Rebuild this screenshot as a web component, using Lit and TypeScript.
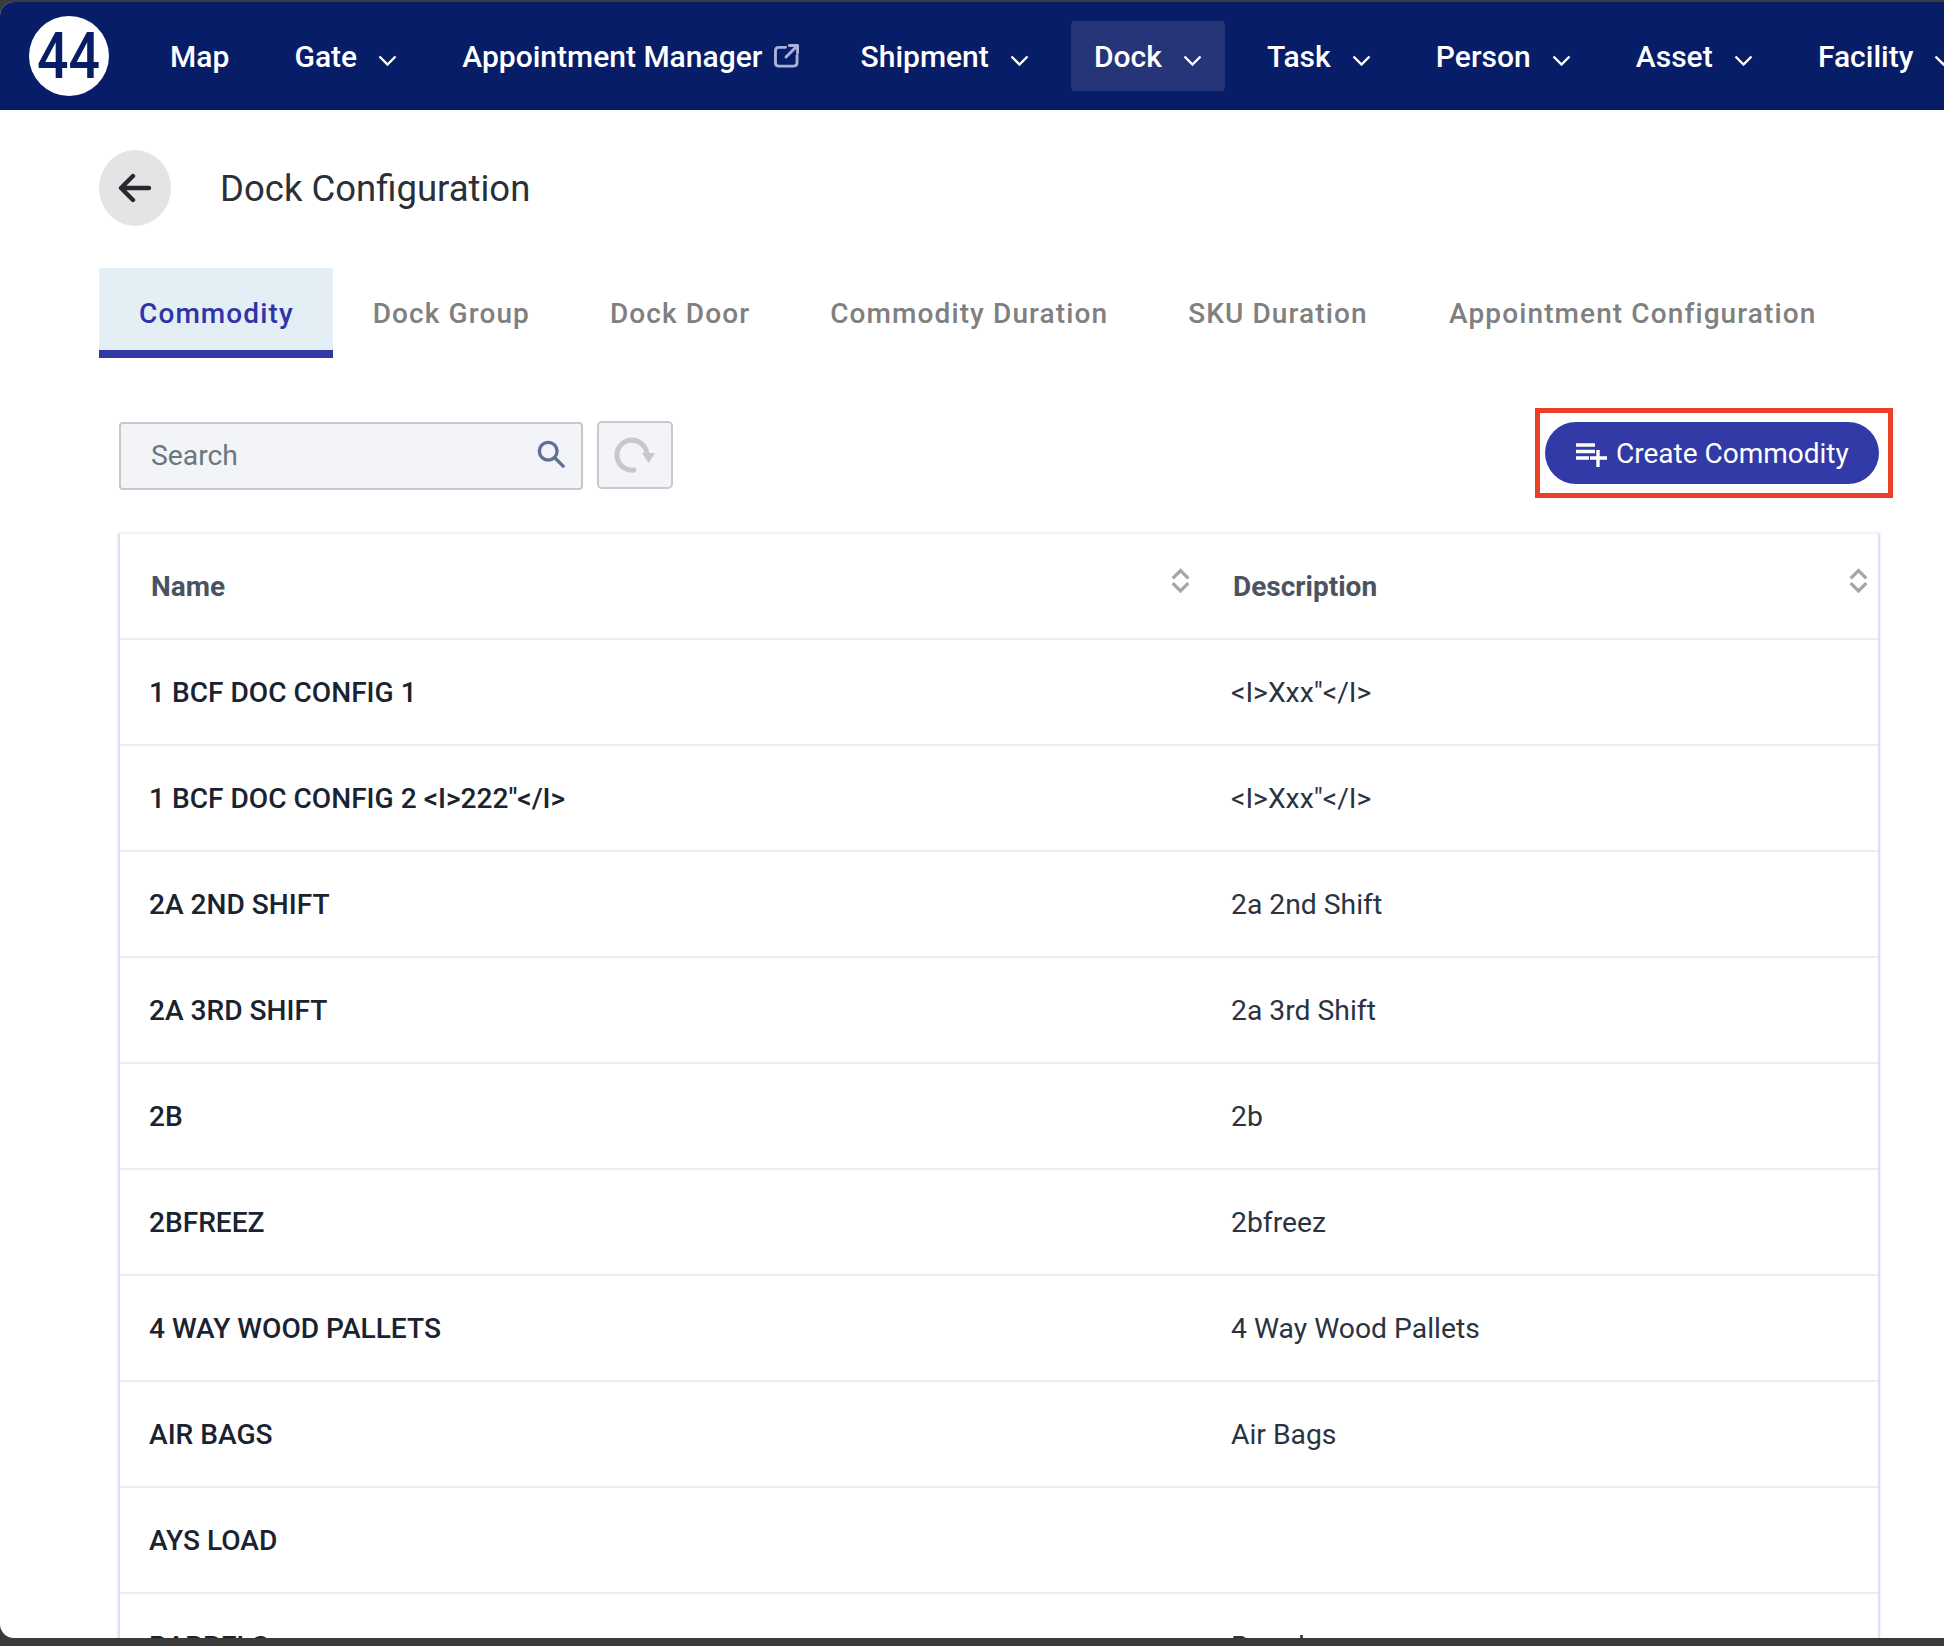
import { LitElement, html, css } from "lit";
import { customElement } from "lit/decorators.js";

const chevron = html`<svg class="chev" viewBox="0 0 19 11"><path d="M1.5 1.5 9.5 9.5 17.5 1.5"/></svg>`;
const sortIcon = html`<svg class="sort" viewBox="0 0 20 24"><path d="M2.5 10 10 2.5 17.5 10M2.5 14.5 10 22 17.5 14.5"/></svg>`;

const navItems: { label: string; chevron?: boolean; external?: boolean; active?: boolean }[] = [
  { label: "Map" },
  { label: "Gate", chevron: true },
  { label: "Appointment Manager", external: true },
  { label: "Shipment", chevron: true },
  { label: "Dock", chevron: true, active: true },
  { label: "Task", chevron: true },
  { label: "Person", chevron: true },
  { label: "Asset", chevron: true },
  { label: "Facility", chevron: true },
];

const tabs = ["Commodity", "Dock Group", "Dock Door", "Commodity Duration", "SKU Duration", "Appointment Configuration"];

const rows: [string, string][] = [
  ["1 BCF DOC CONFIG 1", `<I>Xxx"</I>`],
  [`1 BCF DOC CONFIG 2 <I>222"</I>`, `<I>Xxx"</I>`],
  ["2A 2ND SHIFT", "2a 2nd Shift"],
  ["2A 3RD SHIFT", "2a 3rd Shift"],
  ["2B", "2b"],
  ["2BFREEZ", "2bfreez"],
  ["4 WAY WOOD PALLETS", "4 Way Wood Pallets"],
  ["AIR BAGS", "Air Bags"],
  ["AYS LOAD", ""],
  ["BARRELS", "Barrels"],
];

@customElement("app-root")
export class AppRoot extends LitElement {
  static styles = css`
    :host {
      display: block;
      width: 1944px;
      height: 1646px;
      overflow: hidden;
      background: #3a3a3a;
      font-family: Roboto, "Liberation Sans", sans-serif;
      padding-top: 2px;
      box-sizing: border-box;
    }
    .window {
      height: 1636px;
      background: #fff;
      border-radius: 14px 0 0 14px;
      overflow: hidden;
    }
    nav {
      height: 108px;
      background: #071d68;
      display: flex;
      align-items: center;
      white-space: nowrap;
      padding-left: 29px;
    }
    .logo {
      width: 80px;
      height: 80px;
      flex: none;
      margin-right: 38px;
    }
    .logo text {
      font-family: Roboto, "Liberation Sans", sans-serif;
      font-size: 64px;
      font-weight: 500;
      fill: #071d68;
    }
    .items {
      display: flex;
      gap: 19.2px;
      flex: none;
    }
    .item {
      height: 70px;
      padding: 0 23px;
      display: flex;
      align-items: center;
      color: #fff;
      font-size: 30px;
      font-weight: 500;
      border-radius: 4px;
      box-sizing: border-box;
    }
    .item.active {
      background: #263478;
    }
    .chev {
      width: 19px;
      height: 11px;
      margin-left: 21px;
      margin-top: 8px;
      fill: none;
      stroke: #fff;
      stroke-width: 2.4;
    }
    .ext {
      width: 25px;
      height: 24px;
      margin-left: 12px;
      margin-right: -4px;
      margin-top: -1px;
      fill: none;
      stroke: #a9b1d8;
      stroke-width: 3;
      stroke-linecap: round;
      stroke-linejoin: round;
    }
    .head {
      display: flex;
      align-items: center;
      gap: 49px;
      padding: 40px 0 0 99px;
    }
    .back {
      width: 72px;
      height: 76px;
      border-radius: 50%;
      background: #e4e4e4;
      display: flex;
      align-items: center;
      justify-content: center;
    }
    .back svg {
      width: 34px;
      height: 30px;
      fill: none;
      stroke: #26292f;
      stroke-width: 4.4;
      stroke-linecap: round;
      stroke-linejoin: round;
    }
    h1 {
      margin: 1px 0 0;
      font-size: 36.5px;
      font-weight: 400;
      color: #2b2f36;
    }
    .tabs {
      display: flex;
      margin: 42px 0 0 99px;
    }
    .tab {
      height: 90px;
      box-sizing: border-box;
      padding: 0 40px;
      display: flex;
      align-items: center;
      font-size: 28px;
      font-weight: 500;
      letter-spacing: 1.105px;
      color: #808080;
    }
    .tab.active {
      background: #e3eff5;
      color: #2f35a8;
      box-shadow: inset 0 -8px 0 #3038a6;
      padding-right: 39px;
    }
    .tab:last-child {
      margin-left: 1.5px;
    }
    .toolbar {
      display: flex;
      align-items: flex-start;
      padding: 64px 65px 0 119px;
      height: 111px;
      box-sizing: border-box;
      margin-bottom: 64px;
    }
    .search {
      width: 464px;
      height: 68px;
      box-sizing: border-box;
      border: 2px solid #c5c7cb;
      border-radius: 4px;
      background: #f2f4f8;
      display: flex;
      align-items: center;
      justify-content: space-between;
      padding: 0 16px 0 30px;
      font-size: 28.3px;
      color: #6d7580;
    }
    .search span {
      margin-top: -2px;
    }
    .search svg {
      width: 28px;
      height: 28px;
      fill: none;
      stroke: #5f7296;
      stroke-width: 3.6;
      stroke-linecap: round;
      margin-top: -4px;
    }
    .reload {
      width: 76px;
      height: 68px;
      box-sizing: border-box;
      margin: -1px 0 0 14px;
      border: 2px solid #c8cacd;
      border-radius: 5px;
      background: #f2f4f8;
      display: flex;
      align-items: center;
      justify-content: center;
    }
    .reload svg {
      width: 42px;
      height: 40px;
    }
    .reload .arc {
      fill: none;
      stroke: #c8c8c8;
      stroke-width: 5;
      stroke-linecap: round;
    }
    .reload .tip {
      fill: #c8c8c8;
    }
    .create-wrap {
      margin-left: auto;
      position: relative;
    }
    .create {
      width: 334px;
      height: 62px;
      background: #323aa8;
      color: #fff;
      border-radius: 31px;
      display: flex;
      align-items: center;
      font-size: 28px;
      padding-left: 31px;
      box-sizing: border-box;
      gap: 9px;
    }
    .create span {
      margin-top: 1px;
    }
    .create svg {
      width: 31px;
      height: 24px;
      margin-top: 3px;
      fill: none;
      stroke: #fff;
      stroke-width: 3.4;
    }
    .mark {
      position: absolute;
      left: -10px;
      top: -14px;
      width: 358px;
      height: 90px;
      box-sizing: border-box;
      border: 5px solid #ea4027;
      pointer-events: none;
    }
    .table {
      margin: 0 64px 0 118px;
      border-left: 2px solid #e1dff2;
      border-right: 2px solid #e1dff2;
      border-top: 1px solid #eeedf8;
      box-shadow: 0 0 3px #e4e2f4;
      background: #fff;
    }
    .row {
      height: 106px;
      box-sizing: border-box;
      border-bottom: 2px solid #eeeeee;
      display: grid;
      grid-template-columns: 1082px 1fr;
      align-items: center;
      font-size: 28.3px;
      color: #2b3340;
    }
    .row > div {
      padding-left: 29px;
      display: flex;
      align-items: center;
    }
    .row > div:first-child {
      font-size: 28.1px;
      font-weight: 500;
      color: #1a2330;
    }
    .row.header > div {
      font-size: 28px;
      font-weight: 700;
      color: #4b5361;
      padding-left: 31px;
      padding-right: 9px;
      justify-content: space-between;
    }
    .row.header > div:first-child {
      padding-right: 11px;
    }
    .sort {
      width: 21px;
      height: 25px;
      margin-top: -11px;
      fill: none;
      stroke: #a6a6a6;
      stroke-width: 3.2;
    }
  `;

  render() {
    return html`
      <div class="window">
        <nav>
          <svg class="logo" viewBox="0 0 80 80">
            <circle cx="40" cy="40" r="40" fill="#fff"></circle>
            <text x="39.500" y="62" text-anchor="middle" textLength="63" lengthAdjust="spacingAndGlyphs">44</text>
          </svg>
          <div class="items">
            ${navItems.map(
              (n) => html`<div class="item ${n.active ? "active" : ""}">
                ${n.label}
                ${n.external
                  ? html`<svg class="ext" viewBox="0 0 26 25"><path d="M12 3.500H5Q1.500 3.500 1.500 7V19.500Q1.500 23 5 23H20Q24 23 24 19.500V12M16 1.500H24.500V9.500M24 2 12.500 13.500"/></svg>`
                  : ""}
                ${n.chevron ? chevron : ""}
              </div>`
            )}
          </div>
        </nav>
        <div class="head">
          <div class="back">
            <svg viewBox="0 0 34 30"><path d="M31 15H4M15 3 3 15 15 27"/></svg>
          </div>
          <h1>Dock Configuration</h1>
        </div>
        <div class="tabs">
          ${tabs.map((t, i) => html`<div class="tab ${i === 0 ? "active" : ""}">${t}</div>`)}
        </div>
        <div class="toolbar">
          <div class="search">
            <span>Search</span>
            <svg viewBox="0 0 30 30"><circle cx="12" cy="12" r="9.500"></circle><path d="M19 19 28 28"/></svg>
          </div>
          <div class="reload">
            <svg viewBox="0 0 42 40">
              <path class="arc" d="M20 35A15 15 0 1 1 32.800 18"/>
              <path class="tip" d="M28 18H41L34.500 28Z"/>
            </svg>
          </div>
          <div class="create-wrap">
            <div class="create">
              <svg viewBox="0 0 31 24"><path d="M0 2H19M0 8.500H19M0 15H13M14 15H31M22 7V24"/></svg>
              <span>Create Commodity</span>
            </div>
            <div class="mark"></div>
          </div>
        </div>
        <div class="table">
          <div class="row header">
            <div>Name ${sortIcon}</div>
            <div>Description ${sortIcon}</div>
          </div>
          ${rows.map(
            ([a, b]) => html`<div class="row"><div>${a}</div><div>${b}</div></div>`
          )}
        </div>
      </div>
    `;
  }
}
